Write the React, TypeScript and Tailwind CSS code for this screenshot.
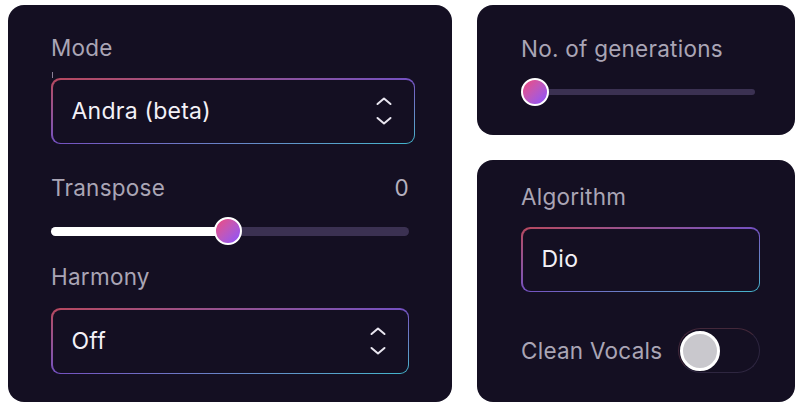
import React from "react";

function Chevrons() {
  return (
    <svg width="18" height="32" viewBox="0 0 18 32" fill="none" stroke="#e9e6f0" strokeWidth="2" strokeLinecap="round" strokeLinejoin="round">
      <path d="M2.5 9 L9 3.5 L15.5 9" />
      <path d="M2.5 23 L9 28.5 L15.5 23" />
    </svg>
  );
}

function GradientBox({ className, children }: { className: string; children: React.ReactNode }) {
  return (
    <div className={"rounded-[9px] p-[1.5px] bg-gradient-to-br from-[#b8475c] via-[#7450c0] to-[#3fb6cc] " + className}>
      <div className="h-full w-full rounded-[8px] bg-[#140f22] flex items-center pl-[19px] pr-[21px]">
        {children}
      </div>
    </div>
  );
}

function Thumb() {
  return (
    <div className="w-[28px] h-[28px] rounded-full border-[2.5px] border-white bg-gradient-to-br from-[#f0457a] to-[#8a4dff] shrink-0" />
  );
}

export default function App() {
  return (
    <div
      className="w-[800px] h-[410px] bg-white flex gap-[25px] pl-[8px] pt-[5px] pr-[5px] pb-[8px] tracking-[0.25px]"
      style={{ fontFamily: "Inter, 'Noto Sans', sans-serif" }}
    >
      {/* Left card */}
      <div className="w-[444px] h-[397px] rounded-[16px] bg-[#140f22] pl-[43px] pr-[43px] pt-[29px] flex flex-col">
        <div className="h-[28px] leading-[28px] text-[22.5px] text-[#aaa5b5]">Mode</div>
        <div className="relative h-[16px]">
          <div className="absolute left-[1px] top-[10px] w-[1px] h-[6px] bg-[#8a7f96]" />
        </div>
        <GradientBox className="w-[364px] h-[66px]">
          <span className="text-[23px] text-[#f3f1f7] flex-1">Andra (beta)</span>
          <Chevrons />
        </GradientBox>
        <div className="mt-[30px] h-[28px] leading-[28px] flex justify-between text-[22.5px] text-[#aaa5b5]">
          <span>Transpose</span>
          <span className="text-[#b5b0bf]">0</span>
        </div>
        <div className="mt-[15px] h-[28px] relative flex items-center">
          <div className="absolute left-0 right-0 h-[9px] rounded-full bg-[#3b3152]" />
          <div className="absolute left-0 w-[177px] h-[9px] rounded-full bg-white" />
          <div className="absolute left-[163px]">
            <Thumb />
          </div>
        </div>
        <div className="mt-[18px] h-[28px] leading-[28px] text-[22.5px] text-[#aaa5b5]">Harmony</div>
        <GradientBox className="mt-[17px] w-[358px] h-[66px]">
          <span className="text-[23px] text-[#f3f1f7] flex-1">Off</span>
          <Chevrons />
        </GradientBox>
      </div>

      {/* Right column */}
      <div className="flex flex-col gap-[25px]">
        <div className="w-[318px] h-[130px] rounded-[16px] bg-[#140f22] pl-[44px] pr-[40px] pt-[30px] flex flex-col">
          <div className="h-[28px] leading-[28px] text-[22.5px] text-[#aaa5b5] whitespace-nowrap">No. of generations</div>
          <div className="mt-[15px] h-[28px] relative flex items-center">
            <div className="absolute left-[14px] right-0 h-[6px] rounded-full bg-[#3b3152]" />
            <div className="absolute left-0">
              <Thumb />
            </div>
          </div>
        </div>
        <div className="w-[318px] h-[242px] rounded-[16px] bg-[#140f22] pl-[44px] pr-[35px] pt-[23px] flex flex-col">
          <div className="h-[28px] leading-[28px] text-[22.5px] text-[#aaa5b5]">Algorithm</div>
          <GradientBox className="mt-[16px] w-[239px] h-[65px]">
            <span className="text-[23px] text-[#f3f1f7]">Dio</span>
          </GradientBox>
          <div className="mt-[36px] flex items-center justify-between">
            <span className="text-[22.5px] text-[#aaa5b5] whitespace-nowrap">Clean Vocals</span>
            <div className="w-[82px] h-[45px] rounded-full border-[1.5px] border-[#2e2640] border-t-[#43283a] border-l-[#43283a] flex items-center pl-[1px]">
              <div className="w-[40px] h-[40px] rounded-full bg-[#c9c8cd] border-[3px] border-white" />
            </div>
          </div>
        </div>
      </div>
    </div>
  );
}
